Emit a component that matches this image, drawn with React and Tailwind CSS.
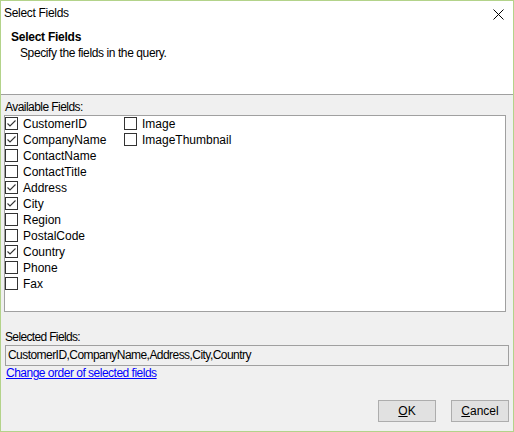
import React from "react";

const col1 = [
  ["CustomerID", true],
  ["CompanyName", true],
  ["ContactName", false],
  ["ContactTitle", false],
  ["Address", true],
  ["City", true],
  ["Region", false],
  ["PostalCode", false],
  ["Country", true],
  ["Phone", false],
  ["Fax", false],
];
const col2 = [
  ["Image", false],
  ["ImageThumbnail", false],
];

function Box({ checked }) {
  return (
    <div className="w-[13px] h-[13px] mt-[1px] border border-[#333333] bg-white shrink-0 relative">
      {checked && (
        <svg className="absolute left-0 top-0" width="11" height="11" viewBox="0 0 11 11">
          <path d="M1.5 5.5 L4 8 L9.5 2.5" fill="none" stroke="#333333" strokeWidth="1.1" />
        </svg>
      )}
    </div>
  );
}

function Item({ label, checked }) {
  return (
    <div className="h-[16px] flex items-start gap-[5px]">
      <Box checked={checked} />
      <span className="leading-[16px] whitespace-nowrap">{label}</span>
    </div>
  );
}

export default function App() {
  return (
    <div
      className="w-[514px] h-[432px] border border-[#b3d38a] bg-[#f0f0f0] flex flex-col text-[12px] text-black overflow-hidden"
      style={{ fontFamily: '"Liberation Sans", Arial, sans-serif' }}
    >
      <div className="bg-white h-[94px] border-b border-[#a0a0a0] flex flex-col">
        <div className="h-[29px] flex items-start justify-between pl-[3px] pr-[9px]">
          <span className="mt-[5px] leading-[14px] tracking-[-0.3px]">Select Fields</span>
          <svg className="mt-[8px]" width="11" height="11" viewBox="0 0 11 11">
            <path d="M0.5 0.5 L10.5 10.5 M10.5 0.5 L0.5 10.5" stroke="#000" strokeWidth="1" />
          </svg>
        </div>
        <div className="pl-[10px] leading-[14px] font-bold tracking-[-0.25px]">Select Fields</div>
        <div className="pl-[19px] mt-[2px] leading-[14px] tracking-[-0.4px]">Specify the fields in the query.</div>
      </div>

      <div className="flex flex-col flex-1">
        <div className="pt-[5px] pl-[4px] leading-[14px] tracking-[-0.55px]">Available Fields:</div>
        <div className="mt-[1px] ml-[3px] w-[502px] h-[197px] border border-[#a0a0a0] bg-white flex">
          <div className="w-[119px] flex flex-col">
            {col1.map(([l, c]) => (
              <Item key={l} label={l} checked={c} />
            ))}
          </div>
          <div className="flex flex-col">
            {col2.map(([l, c]) => (
              <Item key={l} label={l} checked={c} />
            ))}
          </div>
        </div>

        <div className="mt-[18px] pl-[4px] leading-[14px] tracking-[-0.65px]">Selected Fields:</div>
        <div className="mt-[1px] ml-[4px] w-[504px] h-[21px] border border-[#a0a0a0] bg-[#f0f0f0] pl-[2px] pt-[2px] leading-[14px] tracking-[-0.55px] whitespace-nowrap">
          CustomerID,CompanyName,Address,City,Country
        </div>
        <div className="pl-[5px] leading-[14px]">
          <span className="text-[#0000ff] underline tracking-[-0.5px]">Change order of selected fields</span>
        </div>

        <div className="mt-[20px] flex justify-end gap-[15px] pr-[4px]">
          <div className="w-[58px] h-[22px] border border-[#adadad] bg-[#e1e1e1] flex items-center justify-center leading-[14px]">
            <span><span className="underline">O</span>K</span>
          </div>
          <div className="w-[58px] h-[22px] border border-[#adadad] bg-[#e1e1e1] flex items-center justify-center leading-[14px]">
            <span><span className="underline">C</span>ancel</span>
          </div>
        </div>
      </div>
    </div>
  );
}
